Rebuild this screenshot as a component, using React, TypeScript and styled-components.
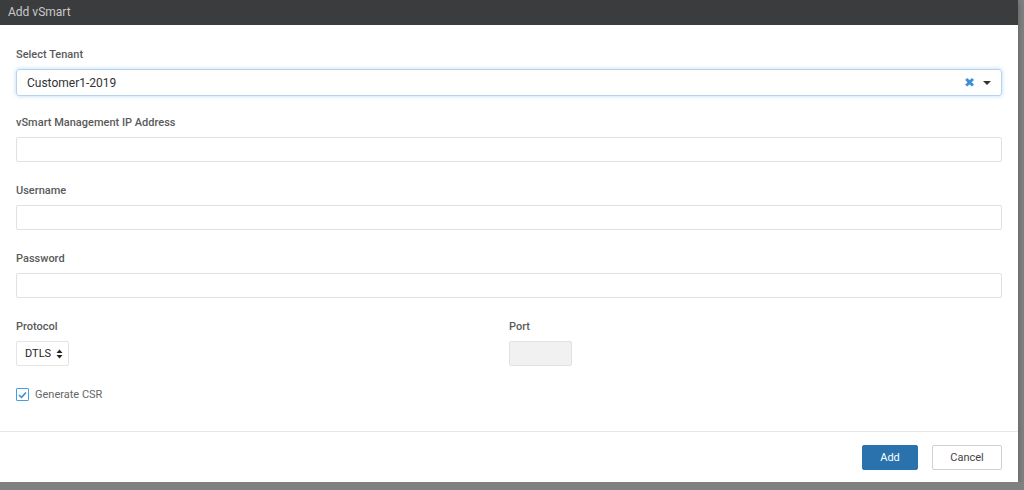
import React from 'react';
import styled, { createGlobalStyle } from 'styled-components';

const GlobalStyle = createGlobalStyle`
  html, body {
    margin: 0;
    padding: 0;
    background: #7f8080;
    font-family: Roboto, "Liberation Sans", Arial, sans-serif;
  }
  * { box-sizing: border-box; }
`;

const Modal = styled.div`
  width: 1018px;
  height: 482px;
  background: #fff;
  display: flex;
  flex-direction: column;
  box-shadow: 0 2px 6px rgba(0, 0, 0, 0.3);
`;

const Header = styled.div`
  height: 25px;
  background: #3b3c3e;
  color: #c9c9c9;
  font-size: 12px;
  line-height: 25px;
  padding-left: 8px;
`;

const Body = styled.div`
  flex: 1;
  padding: 23px 16px 0 16px;
`;

const Group = styled.div`
  height: 68px;
`;

const Label = styled.div`
  font-size: 11px;
  font-weight: 500;
  color: #5a5a5a;
  line-height: 14px;
  margin-bottom: 7px;
`;

const Input = styled.div<{ disabled?: boolean }>`
  height: 25px;
  border: 1px solid #e1e1e1;
  border-radius: 2px;
  background: ${({ disabled }) => (disabled ? '#f1f1f1' : '#fff')};
`;

const TenantSelect = styled.div`
  height: 27px;
  margin-top: 1px;
  border: 1px solid #b7d3ee;
  border-radius: 3px;
  box-shadow: 0 0 4px rgba(102, 175, 233, 0.45);
  display: flex;
  align-items: center;
  padding: 0 10px;
  font-size: 12px;
  color: #333;
`;

const SelectValue = styled.span`
  flex: 1;
`;

const Clear = styled.span`
  color: #3d8fd6;
  font-size: 13px;
  margin-right: 8px;
`;

const Caret = styled.span`
  width: 0;
  height: 0;
  border-left: 4px solid transparent;
  border-right: 4px solid transparent;
  border-top: 4px solid #333;
`;

const Row = styled.div`
  display: grid;
  grid-template-columns: 1fr 1fr;
`;

const SmallSelect = styled.div`
  width: 53px;
  height: 25px;
  border: 1px solid #e4e4e4;
  border-radius: 2px;
  display: flex;
  align-items: center;
  justify-content: space-between;
  padding: 0 5px 0 8px;
  font-size: 11px;
  color: #222;
`;

const PortInput = styled(Input)`
  width: 63px;
`;

const CheckRow = styled.div`
  display: flex;
  align-items: center;
  gap: 6px;
  font-size: 11px;
  color: #666;
`;

const CheckBox = styled.span`
  width: 13px;
  height: 13px;
  border: 1px solid #4a9de0;
  border-radius: 1px;
  display: flex;
  align-items: center;
  justify-content: center;
`;

const Footer = styled.div`
  border-top: 1px solid #e6e6e6;
  height: 51px;
  display: flex;
  align-items: center;
  justify-content: flex-end;
  gap: 14px;
  padding-right: 16px;
`;

const Button = styled.button<{ primary?: boolean }>`
  height: 25px;
  min-width: ${({ primary }) => (primary ? '56px' : '70px')};
  border-radius: 2px;
  font-family: inherit;
  font-size: 11px;
  border: 1px solid ${({ primary }) => (primary ? '#2a72ad' : '#d0d0d0')};
  background: ${({ primary }) => (primary ? '#2a72ad' : '#fff')};
  color: ${({ primary }) => (primary ? '#fff' : '#444')};
  padding: 0 12px;
`;

const App: React.FC = () => {
  return (
    <>
      <GlobalStyle />
      <Modal>
        <Header>Add vSmart</Header>
        <Body>
          <Group>
            <Label>Select Tenant</Label>
            <TenantSelect>
              <SelectValue>Customer1-2019</SelectValue>
              <Clear>✖</Clear>
              <Caret />
            </TenantSelect>
          </Group>
          <Group>
            <Label>vSmart Management IP Address</Label>
            <Input />
          </Group>
          <Group>
            <Label>Username</Label>
            <Input />
          </Group>
          <Group>
            <Label>Password</Label>
            <Input />
          </Group>
          <Row>
            <Group>
              <Label>Protocol</Label>
              <SmallSelect>
                DTLS
                <svg width="7" height="10" viewBox="0 0 7 10">
                  <path d="M3.5 0.5 L6.5 4 L0.5 4 Z M0.5 6 L6.5 6 L3.5 9.5 Z" fill="#222" />
                </svg>
              </SmallSelect>
            </Group>
            <Group>
              <Label>Port</Label>
              <PortInput disabled />
            </Group>
          </Row>
          <CheckRow>
            <CheckBox>
              <svg width="9" height="8" viewBox="0 0 9 8">
                <path d="M1 4 L3.5 6.3 L8 1.5" stroke="#3d8fd6" strokeWidth="1.6" fill="none" />
              </svg>
            </CheckBox>
            Generate CSR
          </CheckRow>
        </Body>
        <Footer>
          <Button primary>Add</Button>
          <Button>Cancel</Button>
        </Footer>
      </Modal>
    </>
  );
};

export default App;
